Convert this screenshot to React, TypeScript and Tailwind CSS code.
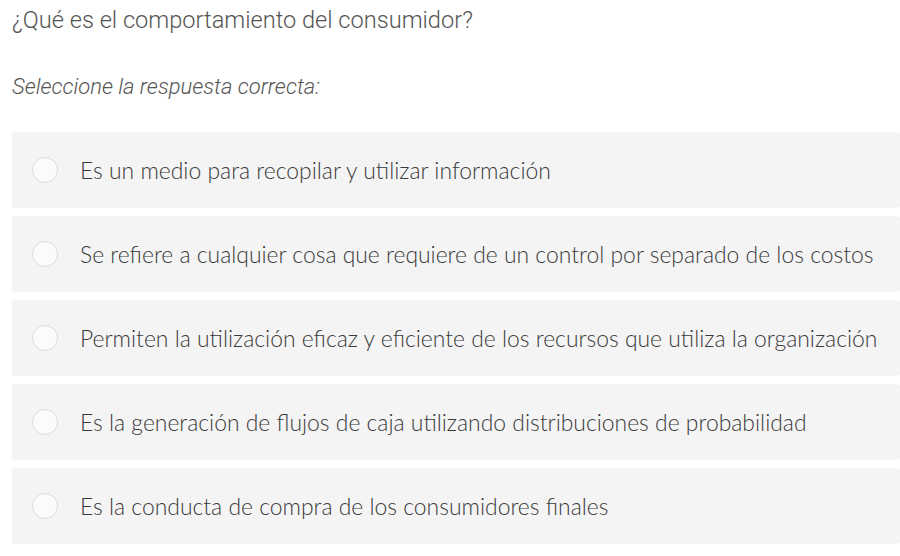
import React from "react";

const options = [
  "Es un medio para recopilar y utilizar información",
  "Se refiere a cualquier cosa que requiere de un control por separado de los costos",
  "Permiten la utilización eficaz y eficiente de los recursos que utiliza la organización",
  "Es la generación de flujos de caja utilizando distribuciones de probabilidad",
  "Es la conducta de compra de los consumidores finales",
];

export default function App() {
  return (
    <div className="w-[900px] h-[556px] bg-white pl-[12px] overflow-hidden">
      <div className="pt-[5px] text-[23.6px] leading-[30px] font-light text-[#555]" style={{ fontFamily: "Roboto, sans-serif" }}>
        ¿Qué es el comportamiento del consumidor?
      </div>
      <div className="mt-[38px] text-[22px] leading-[28px] font-light italic text-[#555]" style={{ fontFamily: "Roboto, sans-serif" }}>
        Seleccione la respuesta correcta:
      </div>
      <div className="mt-[31px] flex flex-col gap-[8px]">
        {options.map((o) => (
          <div key={o} className="h-[76px] bg-[#f4f4f4] rounded-[3px] flex items-center pl-[20px]">
            <div className="w-[26px] h-[26px] rounded-full border border-[#dcdcdc] bg-[#fbfbfb] shrink-0" />
            <div className="ml-[22px] text-[22.9px] font-light text-[#3a3a3a] whitespace-nowrap" style={{ fontFamily: "Lato, sans-serif" }}>
              {o}
            </div>
          </div>
        ))}
      </div>
    </div>
  );
}
